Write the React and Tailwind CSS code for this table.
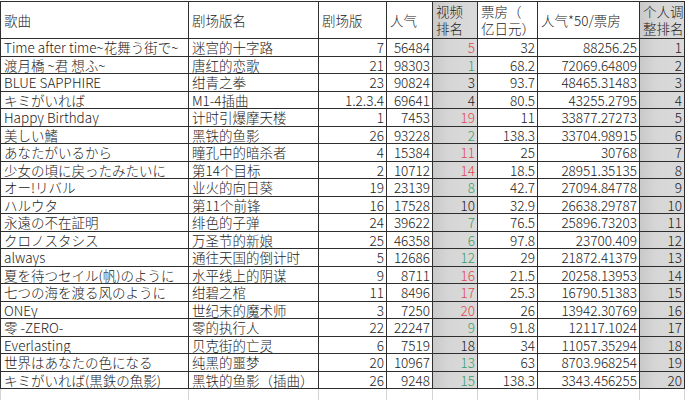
import React from "react";

const rows = [
  ["Time after time~花舞う街で~", "迷宫的十字路", "7", "56484", "5", "r", "32", "88256.25", "1"],
  ["渡月橋 ~君 想ふ~", "唐红的恋歌", "21", "98303", "1", "g", "68.2", "72069.64809", "2"],
  ["BLUE SAPPHIRE", "绀青之拳", "23", "90824", "3", "", "93.7", "48465.31483", "3"],
  ["キミがいれば", "M1-4插曲", "1.2.3.4", "69641", "4", "", "80.5", "43255.2795", "4"],
  ["Happy Birthday", "计时引爆摩天楼", "1", "7453", "19", "r", "11", "33877.27273", "5"],
  ["美しい鰭", "黑铁的鱼影", "26", "93228", "2", "g", "138.3", "33704.98915", "6"],
  ["あなたがいるから", "瞳孔中的暗杀者", "4", "15384", "11", "r", "25", "30768", "7"],
  ["少女の頃に戻ったみたいに", "第14个目标", "2", "10712", "14", "r", "18.5", "28951.35135", "8"],
  ["オー!リバル", "业火的向日葵", "19", "23139", "8", "g", "42.7", "27094.84778", "9"],
  ["ハルウタ", "第11个前锋", "16", "17528", "10", "", "32.9", "26638.29787", "10"],
  ["永遠の不在証明", "绯色的子弹", "24", "39622", "7", "g", "76.5", "25896.73203", "11"],
  ["クロノスタシス", "万圣节的新娘", "25", "46358", "6", "g", "97.8", "23700.409", "12"],
  ["always", "通往天国的倒计时", "5", "12686", "12", "g", "29", "21872.41379", "13"],
  ["夏を待つセイル(帆)のように", "水平线上的阴谋", "9", "8711", "16", "r", "21.5", "20258.13953", "14"],
  ["七つの海を渡る风のように", "绀碧之棺", "11", "8496", "17", "r", "25.3", "16790.51383", "15"],
  ["ONEy", "世纪末的魔术师", "3", "7250", "20", "r", "26", "13942.30769", "16"],
  ["零 -ZERO-", "零的执行人", "22", "22247", "9", "g", "91.8", "12117.1024", "17"],
  ["Everlasting", "贝克街的亡灵", "6", "7519", "18", "", "34", "11057.35294", "18"],
  ["世界はあなたの色になる", "纯黑的噩梦", "20", "10967", "13", "g", "63", "8703.968254", "19"],
  ["キミがいれば(黒鉄の魚影)", "黑铁的鱼影（插曲）", "26", "9248", "15", "g", "138.3", "3343.456255", "20"],
];

const cell = "border-r border-b border-[#2e2e2e] flex items-center overflow-hidden whitespace-nowrap leading-[16px]";
const gray = "bg-[linear-gradient(to_right,#c9c9c9,#d6d6d6_35%,#dadada)]";

function Two({ a, b, extra = "" }) {
  return (
    <div className={`${cell} ${extra} pl-[3px]`}>
      <div className="flex flex-col leading-[17px]">
        <span>{a}</span>
        <span>{b}</span>
      </div>
    </div>
  );
}

export default function App() {
  return (
    <div
      className="w-[693px] h-[400px] bg-white overflow-hidden pt-[1px] text-[13.5px] font-light text-[#222]"
      style={{ fontFamily: '"Noto Sans CJK SC", "Noto Sans", sans-serif' }}
    >
      <div className="grid grid-cols-[188px_130px_68px_46px_45px_60px_102px_45px] w-fit border-l border-t border-[#2e2e2e] auto-rows-[17.5px] grid-rows-[37px]">
        <div className={`${cell} pl-[3px]`}>歌曲</div>
        <div className={`${cell} pl-[3px]`}>剧场版名</div>
        <div className={`${cell} pl-[3px]`}>剧场版</div>
        <div className={`${cell} pl-[3px]`}>人气</div>
        <Two a="视频" b="排名" extra={gray} />
        <Two a="票房（" b="亿日元）" />
        <div className={`${cell} pl-[3px]`}>人气*50/票房</div>
        <Two a="个人调" b="整排名" extra={gray} />
        {rows.map((r, i) => (
          <React.Fragment key={i}>
            <div className={`${cell} pl-[3px]`}>{r[0]}</div>
            <div className={`${cell} pl-[3px]`}>{r[1]}</div>
            <div className={`${cell} justify-end pr-[2px]`}>{r[2]}</div>
            <div className={`${cell} justify-end pr-[2px]`}>{r[3]}</div>
            <div
              className={`${cell} ${gray} justify-end pr-[2px] ${
                r[5] === "r" ? "text-[#e0494f]" : r[5] === "g" ? "text-[#3aa068]" : ""
              }`}
            >
              {r[4]}
            </div>
            <div className={`${cell} justify-end pr-[2px]`}>{r[6]}</div>
            <div className={`${cell} justify-end pr-[2px]`}>{r[7]}</div>
            <div className={`${cell} ${gray} justify-end pr-[2px]`}>{r[8]}</div>
          </React.Fragment>
        ))}
      </div>
      <div className="grid grid-cols-[188px_130px_68px_46px_45px_60px_102px_45px] w-fit border-l border-[#d4d4d4] h-[12px]">
        <div className="border-r border-[#d4d4d4]" />
        <div className="border-r border-[#d4d4d4]" />
        <div className="border-r border-[#d4d4d4]" />
        <div className="border-r border-[#d4d4d4]" />
        <div className="border-r border-[#d4d4d4]" />
        <div className="border-r border-[#d4d4d4]" />
        <div className="border-r border-[#d4d4d4]" />
        <div className="border-r border-[#d4d4d4]" />
      </div>
    </div>
  );
}
